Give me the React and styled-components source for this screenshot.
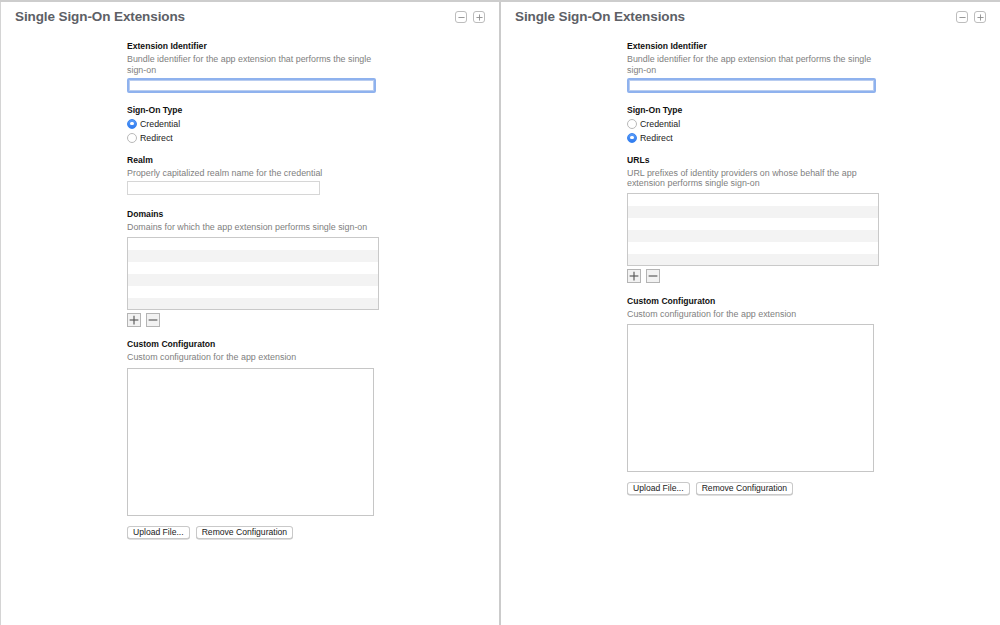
import React from 'react'
import styled, { createGlobalStyle } from 'styled-components'

const GlobalStyle = createGlobalStyle`
  html, body {
    margin: 0;
    padding: 0;
    background: #ffffff;
  }
  body {
    font-family: "Liberation Sans", Arial, sans-serif;
    -webkit-font-smoothing: antialiased;
  }
`

const Page = styled.div`
  display: flex;
  width: 1000px;
  height: 625px;
  overflow: hidden;
  border-top: 2px solid #cdcdcd;
  box-sizing: border-box;
`

const Panel = styled.section`
  width: ${p => p.$width}px;
  flex: none;
  box-sizing: border-box;
  border-left: ${p => (p.$first ? '1px solid #d4d4d4' : 'none')};
  border-right: ${p => (p.$first ? '2px solid #cbcbcb' : 'none')};
  background: #fff;
`

const Header = styled.div`
  display: flex;
  align-items: center;
  justify-content: space-between;
  padding: 6px 14px 0 14px;
  height: 17px;
`

const Title = styled.h2`
  margin: 0;
  font-size: 13.5px;
  font-weight: 700;
  color: #5d6066;
  letter-spacing: -0.1px;
`

const HeaderButtons = styled.div`
  display: flex;
  gap: 6px;
  margin-top: 1px;
`

const SmallButton = styled.button`
  width: 12px;
  height: 12px;
  padding: 0;
  border: 1px solid #bdbdbd;
  border-radius: 3px;
  background: #fff;
  display: flex;
  align-items: center;
  justify-content: center;
`

const Content = styled.div`
  margin-left: ${p => p.$left}px;
  width: 252px;
  padding-top: 15px;
`

const Section = styled.div`
  margin-bottom: ${p => p.$gap ?? 11}px;
`

const Label = styled.div`
  font-size: 8.6px;
  font-weight: 700;
  color: #111;
  line-height: 12px;
`

const Desc = styled.div`
  font-size: 8.9px;
  color: #808080;
  line-height: 10.8px;
  width: 250px;
  margin-top: 2px;
`

const TextField = styled.div`
  box-sizing: border-box;
  width: ${p => p.$width}px;
  height: ${p => (p.$focused ? 15 : 14)}px;
  margin-top: ${p => p.$top ?? 3}px;
  background: #fff;
  border: ${p => (p.$focused ? '2px solid #8fb2ee' : '1px solid #d6d6d6')};
  border-radius: ${p => (p.$focused ? '2px' : '0')};
  box-shadow: ${p => (p.$focused ? 'inset 0 0 0 1px #b9cdf0' : 'none')};
`

const RadioGroup = styled.div`
  margin-top: 2px;
  display: flex;
  flex-direction: column;
  gap: 2px;
`

const RadioRow = styled.label`
  display: flex;
  align-items: center;
  gap: 3px;
  height: 12px;
  font-size: 8.8px;
  color: #1a1a1a;
`

const RadioDot = styled.span`
  width: 10px;
  height: 10px;
  box-sizing: border-box;
  border-radius: 50%;
  border: 1px solid ${p => (p.$on ? '#3a84f0' : '#b9b9b9')};
  background: ${p => (p.$on ? 'linear-gradient(#5a9cf8, #2f7bf0)' : '#fff')};
  display: flex;
  align-items: center;
  justify-content: center;
  &::after {
    content: '';
    width: 3.5px;
    height: 3.5px;
    border-radius: 50%;
    background: ${p => (p.$on ? '#fff' : 'transparent')};
  }
`

const List = styled.div`
  box-sizing: border-box;
  width: 252px;
  height: 73px;
  margin-top: 4px;
  border: 1px solid #c9c9c9;
  display: flex;
  flex-direction: column;
  overflow: hidden;
`

const ListRow = styled.div`
  height: 12px;
  flex: none;
  background: ${p => (p.$alt ? '#f3f3f3' : '#fff')};
`

const PlusMinus = styled.div`
  display: flex;
  gap: 5px;
  margin-top: 3px;
`

const SquareButton = styled.button`
  width: 14px;
  height: 14px;
  padding: 0;
  border: 1px solid #b4b4b4;
  background: #f2f2f2;
  display: flex;
  align-items: center;
  justify-content: center;
`

const TextArea = styled.div`
  box-sizing: border-box;
  width: 247px;
  height: 148px;
  margin-top: ${p => p.$top ?? 5}px;
  border: 1px solid #c6c6c6;
  background: #fff;
`

const ButtonRow = styled.div`
  display: flex;
  gap: 6px;
  margin-top: 10px;
`

const PushButton = styled.button`
  height: 13px;
  padding: 0 5px;
  border: 1px solid #c9c9c9;
  border-radius: 3px;
  background: #fff;
  box-shadow: 0 0.5px 0 #bdbdbd;
  font-family: "Liberation Sans", Arial, sans-serif;
  font-size: 8.6px;
  color: #1a1a1a;
  line-height: 11px;
`

function Glyph({ kind, size = 8, color = '#8a8a8a', stroke = 1 }) {
  return (
    <svg width={size} height={size} viewBox="0 0 8 8">
      <line x1="0.5" y1="4" x2="7.5" y2="4" stroke={color} strokeWidth={stroke} />
      {kind === 'plus' && <line x1="4" y1="0.5" x2="4" y2="7.5" stroke={color} strokeWidth={stroke} />}
    </svg>
  )
}

function Radio({ on, children }) {
  return (
    <RadioRow>
      <RadioDot $on={on} />
      {children}
    </RadioRow>
  )
}

function RowList() {
  return (
    <List>
      {[0, 1, 2, 3, 4, 5].map(i => (
        <ListRow key={i} $alt={i % 2 === 1} />
      ))}
    </List>
  )
}

function AddRemove() {
  return (
    <PlusMinus>
      <SquareButton><Glyph kind="plus" size={10} color="#555" stroke={0.9} /></SquareButton>
      <SquareButton><Glyph kind="minus" size={10} color="#555" stroke={0.9} /></SquareButton>
    </PlusMinus>
  )
}

function SSOPanel({ first, width, left, redirect }) {
  return (
    <Panel $first={first} $width={width}>
      <Header>
        <Title>Single Sign-On Extensions</Title>
        <HeaderButtons>
          <SmallButton><Glyph kind="minus" size={7} /></SmallButton>
          <SmallButton><Glyph kind="plus" size={7} /></SmallButton>
        </HeaderButtons>
      </Header>
      <Content $left={left}>
        <Section>
          <Label>Extension Identifier</Label>
          <Desc>Bundle identifier for the app extension that performs the single sign-on</Desc>
          <TextField $focused $width={249} $top={2} />
        </Section>
        <Section $gap={10}>
          <Label>Sign-On Type</Label>
          <RadioGroup>
            <Radio on={!redirect}>Credential</Radio>
            <Radio on={redirect}>Redirect</Radio>
          </RadioGroup>
        </Section>
        {redirect ? (
          <Section $gap={12}>
            <Label>URLs</Label>
            <Desc>URL prefixes of identity providers on whose behalf the app extension performs single sign-on</Desc>
            <RowList />
            <AddRemove />
          </Section>
        ) : (
          <>
            <Section $gap={13}>
              <Label>Realm</Label>
              <Desc>Properly capitalized realm name for the credential</Desc>
              <TextField $width={193} $top={3} />
            </Section>
            <Section $gap={11}>
              <Label>Domains</Label>
              <Desc>Domains for which the app extension performs single sign-on</Desc>
              <RowList />
              <AddRemove />
            </Section>
          </>
        )}
        <Section>
          <Label>Custom Configuraton</Label>
          <Desc>Custom configuration for the app extension</Desc>
          <TextArea $top={redirect ? 4 : 5} />
          <ButtonRow>
            <PushButton>Upload File...</PushButton>
            <PushButton>Remove Configuration</PushButton>
          </ButtonRow>
        </Section>
      </Content>
    </Panel>
  )
}

export default function App() {
  return (
    <>
      <GlobalStyle />
      <Page>
        <SSOPanel first width={501} left={126} />
        <SSOPanel width={499} left={126} redirect />
      </Page>
    </>
  )
}
